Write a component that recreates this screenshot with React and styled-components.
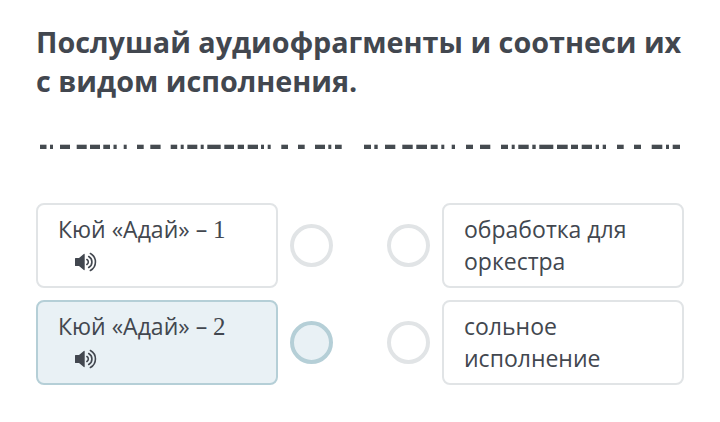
import React from "react";
import styled, { createGlobalStyle } from "styled-components";

const GlobalStyle = createGlobalStyle`
  * { box-sizing: border-box; }
  body { margin: 0; background: #fff; font-family: "Open Sans", sans-serif; color: #42474f; }
`;

const Page = styled.main`
  height: 422px;
  padding: 22px 36px 0;
  overflow: hidden;
`;

const Title = styled.h1`
  margin: 0;
  font-size: 28.75px;
  line-height: 39px;
  font-weight: 700;
  white-space: nowrap;
`;

const Dashes = styled.svg`
  display: block;
  width: 648px;
  height: 6px;
  margin-top: 44px;
`;

const Rows = styled.div`
  display: grid;
  gap: 12px;
  margin-top: 53px;
`;

const Row = styled.div`
  display: flex;
  justify-content: space-between;
`;

const Side = styled.div`
  display: flex;
  align-items: center;
  gap: 12px;
`;

const Card = styled.div`
  width: 242px;
  height: 85px;
  padding: 8px 20px;
  border: 2px solid ${(p) => (p.$active ? "#b5cfd7" : "#e1e4e6")};
  border-radius: 8px;
  background: ${(p) => (p.$active ? "#e9f1f5" : "#fff")};
  font-size: 23px;
  line-height: 32px;
  white-space: nowrap;
`;

const Num = styled.span`
  font-family: "Liberation Serif", serif;
  font-size: 25px;
  line-height: 1;
`;

const Circle = styled.div`
  width: 43px;
  height: 43px;
  border-radius: 50%;
  border: 4px solid ${(p) => (p.$active ? "#b5cfd7" : "#e1e4e6")};
  background: ${(p) => (p.$active ? "#e9f1f5" : "#fff")};
`;

const Speaker = styled.svg`
  display: block;
  width: 24px;
  height: 20px;
  margin: 7px 0 0 16px;
`;

const SoundIcon = () => (
  <Speaker viewBox="0 0 24 20" fill="none" stroke="#42474f">
    <path d="M1 6.600q0-.6.6-.6H5l4.800-4q.9-.5.9.5v15q0 1-.9.5L5 14H1.600q-.6 0-.6-.6z" fill="#42474f" stroke="none" />
    <path
      d="M12.900 7.500a2.900 2.900 0 0 1 0 5M14.700 4.500a6.300 6.300 0 0 1 0 11M16.400 1.500a9.700 9.700 0 0 1 0 17"
      strokeWidth="1.6"
      strokeLinecap="round"
    />
  </Speaker>
);

// Each dash is [start, end] along the divider.
const dashes = [
  [4, 10.5], [14, 17], [24, 34], [40.700, 50.700], [54, 64], [67.300, 74], [77.500, 80.700],
  [87.700, 90.700], [101, 107.700], [114.300, 124.600], [134.700, 141.200], [144.700, 147.700],
  [151.300, 161.300], [164.700, 167.700], [171.300, 184.700], [188.300, 198], [201.700, 208],
  [211.700, 222], [225, 228], [231.700, 234.700], [245.300, 252], [262, 268.700], [279, 289],
  [292.300, 295.300], [299, 305.700],
  [328, 335], [338.300, 341.700], [349, 359.300], [366.300, 376.700], [380.300, 391],
  [394.700, 401.700], [405.300, 408.300], [415.700, 419], [430, 437], [444, 454.300],
  [465, 472], [475.700, 478.700], [482.300, 492.700], [496.300, 499.700], [503.300, 517.300],
  [521, 531.700], [535, 542], [545.700, 556], [559.700, 563], [566.700, 570], [581, 587.700],
  [598, 605], [615.700, 626.300], [630, 633], [636.700, 644],
];

const Divider = () => (
  <Dashes viewBox="0 0 648 6" fill="#454b50">
    {dashes.map(([start, end]) => (
      <rect key={start} x={start} y="0.7" width={end - start} height="4.3" />
    ))}
  </Dashes>
);

const pairs = [
  { n: 1, right: ["обработка для", "оркестра"], active: false },
  { n: 2, right: ["сольное", "исполнение"], active: true },
];

export default function App() {
  return (
    <Page>
      <GlobalStyle />
      <Title>Послушай аудиофрагменты и соотнеси их<br />с видом исполнения.</Title>
      <Divider />
      <Rows>
        {pairs.map((p) => (
          <Row key={p.n}>
            <Side>
              <Card $active={p.active}>Кюй «Адай» – <Num>{p.n}</Num><SoundIcon /></Card>
              <Circle $active={p.active} />
            </Side>
            <Side>
              <Circle />
              <Card>{p.right[0]}<br />{p.right[1]}</Card>
            </Side>
          </Row>
        ))}
      </Rows>
    </Page>
  );
}
